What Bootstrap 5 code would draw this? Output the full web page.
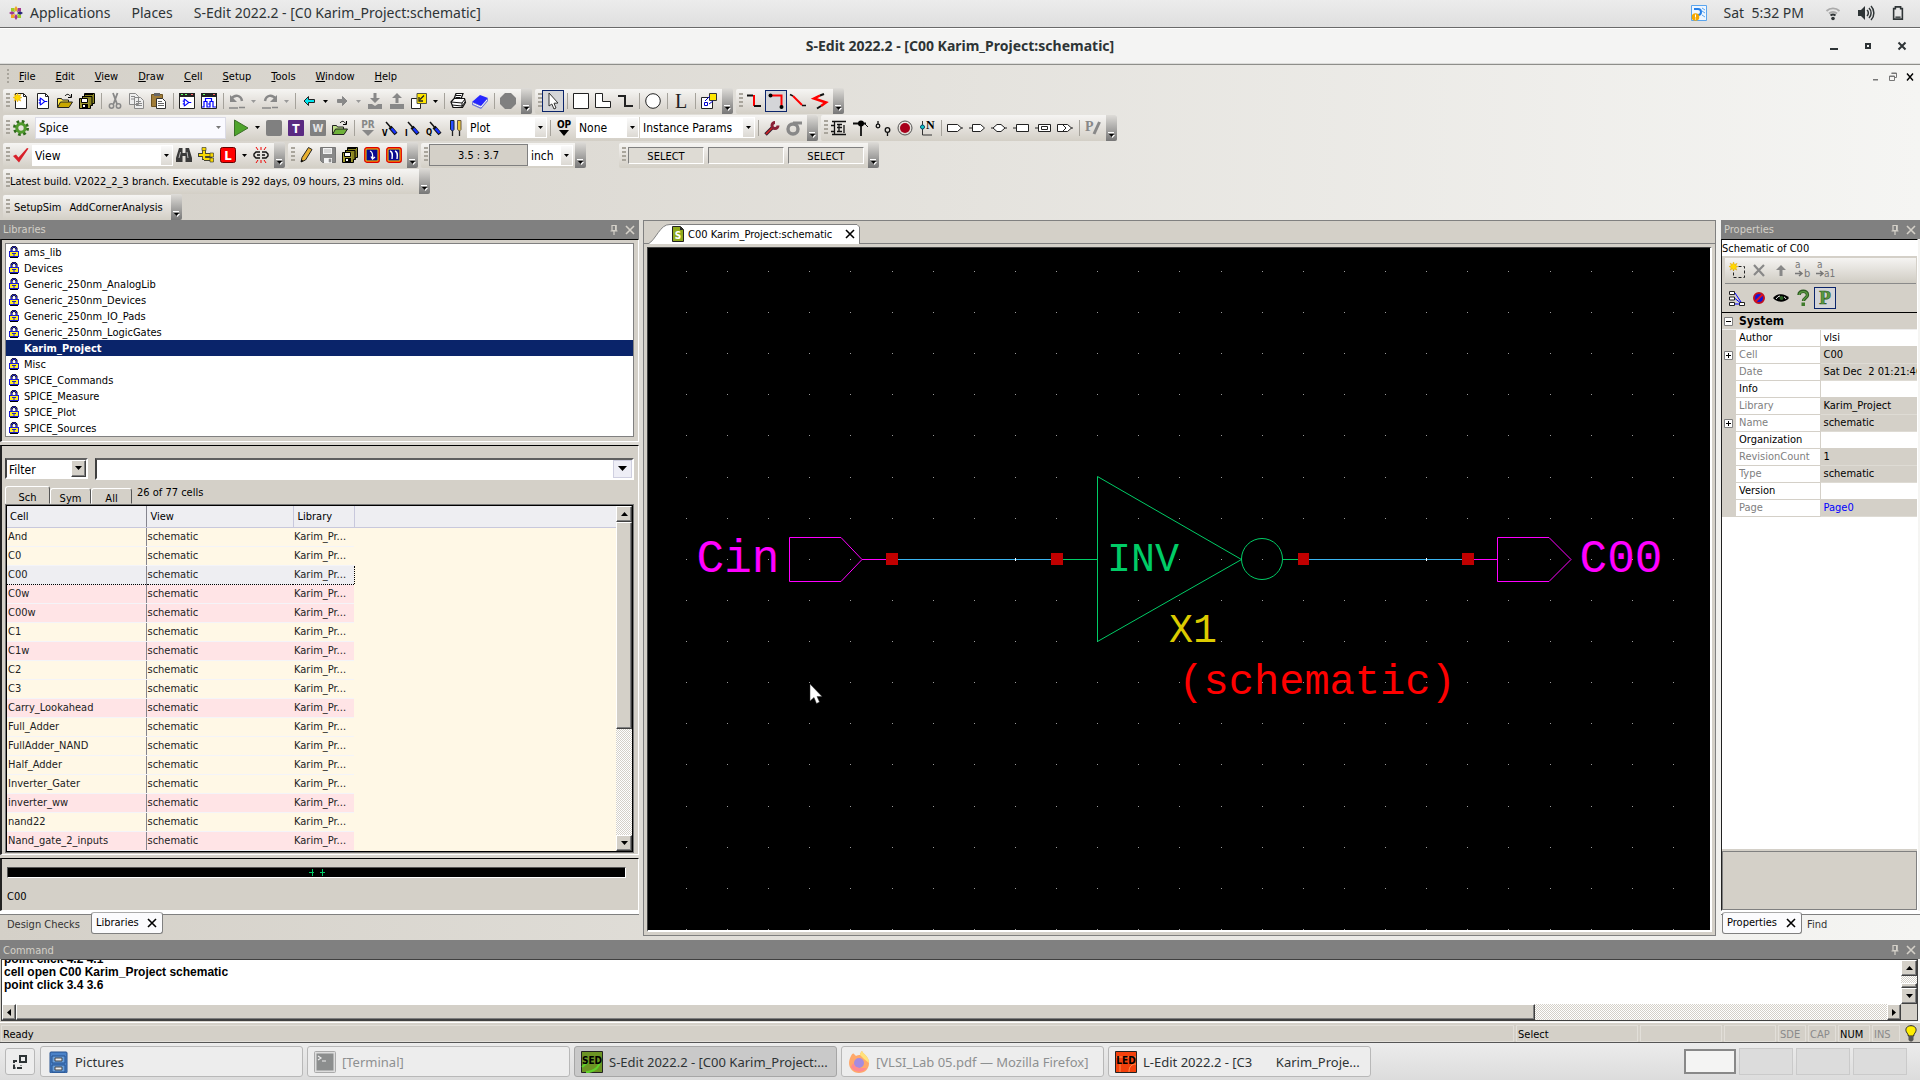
<!DOCTYPE html>
<html lang="en">
<head>
<meta charset="utf-8">
<meta name="viewport" content="width=device-width, initial-scale=1">
<title>S-Edit 2022.2 - [C00 Karim_Project:schematic]</title>
<link href="https://cdn.jsdelivr.net/npm/bootstrap@5.3.0/dist/css/bootstrap.min.css" rel="stylesheet">
<style>
:root{--face:#d4d0c8;--ui:"DejaVu Sans Condensed","DejaVu Sans",sans-serif;--desk:"Noto Sans","Open Sans",sans-serif}
body{font:11px/18px var(--ui);color:#000;background:linear-gradient(90deg,#d4d0c8,#f5f5f3);height:100vh;overflow:hidden}
button,input,select{font:inherit;color:inherit;border-radius:0}
button{border:0;background:none;padding:0}
a,a:hover{color:inherit;text-decoration:none}
svg{display:block;flex:none}
.ic{width:16px;height:16px;overflow:visible}
.ic-12{width:12px;height:12px}
.ic-14{width:14px;height:14px}
.ic-wide{width:18px}
.ic-doc{width:12px}
svg text{font-family:var(--ui)}
/* desktop bars */
.desk-top{height:28px;background:linear-gradient(#ececec,#dfdfdf);border-bottom:1px solid #6a6a6a;font:14px/26px var(--desk);color:#2e3436}
.desk-top .launch{gap:21px;padding-left:9px}
.desk-top .launch .gap-icon{gap:7px}
.desk-top .tray{gap:17px;padding-right:15px}
.desk-top .tray .near{margin-left:5px}
.desk-top .tray .wide{margin-left:4px}
.win-title{height:37px;background:#f4f4f3;border-bottom:1px solid #8e8e8a;box-shadow:inset 0 1px #fff,inset 0 -1px #dcdcda;font:bold 14px/36px var(--desk);color:#2e3436}
.win-title .ctl{gap:24px;right:13px;top:13px}
.win-title .ctl svg{width:10px;height:10px}
/* menus and tool bars */
.menu-strip{height:24px;padding-left:4px}
.menu-strip a{padding:1px 10px 0}
.mdi{gap:7px;padding-right:5px}
.mdi svg{width:10px;height:10px}
.grip{width:7px;height:16px;padding-left:3px;background:repeating-linear-gradient(#a9a59c 0 2px,transparent 2px 4px) content-box}
.grip.lone{width:5px}
.tool-row{height:26px;padding-left:3px;gap:3px}
.tool-row.tall{height:28px}
.tool-row.last{height:25px}
.tool-set{height:25px;background:linear-gradient(#f6f5f3,#e4e1dc 50%,#d3cfc6);border-radius:2px}
.tall .tool-set{height:26px}
.tb{width:22px;height:24px;display:flex;align-items:center;justify-content:center}
.tb.on{background:#d4d5d8;border:1px solid #0a246a;height:22px}
.dd{width:11px;height:24px;display:flex;align-items:center;justify-content:center}
.dd svg,.combo svg{width:5px;height:3px}
.dd.off{color:#999}
.vr-sep{width:6px;display:flex;justify-content:center}
.vr-sep::before{content:"";width:1px;height:16px;background:#a5a29b}
.hnd{width:11px;height:26px;margin-left:2px;background:linear-gradient(#dedcd8,#777);display:flex;align-items:end;justify-content:center;padding-bottom:3px;border-radius:0 2px 2px 0}
.hnd svg{width:7px;height:6px}
.combo{height:21px;background:#fff;position:relative;display:flex;font-size:12px}
.combo select{appearance:none;border:0;background:transparent;width:100%;padding:1px 14px 0 3px;outline:0}
.combo .arr{position:absolute;right:1px;top:1px;bottom:1px;width:11px;background:linear-gradient(#fafafa,#dcd9d3);display:flex;align-items:center;justify-content:center;pointer-events:none}
.combo.soft .arr{background:none;color:#777}
.w-spice{width:191px;height:22px;background:#fafaff;border:1px solid #dcdce6;margin:0 4px 0 3px}
.w-plot{width:80px}.w-none{width:64px;border-right:1px solid var(--face);margin-left:1px}.w-inst{width:115px}.w-view{width:141px}.w-inch{width:45px}
.coord{width:99px;height:22px;border:1px solid #808080;background:var(--face);text-align:center;line-height:22px;margin-left:1px}
.mode-box{width:76px;height:17px;margin:0 2px;border:1px solid;border-color:#808080 #fff #fff #808080;background:#dedbd4;text-align:center;line-height:17px}
.ms-off{margin-left:30px}
.build{padding:2px 13px 0 0}
.user-cmd{padding:2px 4px 0}
/* docked panes */
.cap{height:19px;background:#808080;color:#d4d0c8;padding:1px 3px 0;line-height:19px}
.dock-l{width:639px}
.dock-r{width:199px}
.well{background:var(--face);border:solid;border-width:1px 1px 1px 2px;border-color:#000 #fff #fff #222}
.stretch{min-height:0;min-width:0}
.cells-well{margin:3px 0;padding:12px 4px 2px 3px}
.lib-list{border:1px solid #808080;background:#fff;margin:3px 4px 4px 3px}
.lib-list a{display:flex;align-items:center;height:16px;padding:2px 0 0 3px;gap:5px}
.lib-list .lk{width:10px;height:12px;margin-top:-2px}
.lib-list a.cur{background:#0a246a;color:#fff;font-weight:bold;padding-left:18px}
.sunk{border:2px solid;border-color:#606060 #fff #fff #404040;background:#fff}
.filter-row{gap:7px;height:22px}
.filter-row .pick{width:83px;height:21px}
.pick select{appearance:none;border:0;background:transparent;width:100%;padding:1px 2px 0;outline:0;font-size:12px}
.raise{background:var(--face);border:1px solid;border-color:#fff #404040 #404040 #fff;box-shadow:inset -1px -1px #808080;display:flex;align-items:center;justify-content:center;flex:none}
.raise svg{width:7px;height:4px}
.pick .raise{width:15px}
.filter-row .txt{border:2px solid;border-color:#606060 #fff #fff #404040}
.filter-row .txt input{border:0;outline:0;background:#fff;min-width:0}
.filter-row .txt button{width:19px;background:#eeeef6;border:1px solid #cfcfe0;display:flex;align-items:center;justify-content:center}
.filter-row .txt svg{width:9px;height:5px}
.cell-tabs{height:18px;align-items:end;margin-top:6px}
.cell-tabs button{height:16px;width:41px;border:1px solid;border-color:#fff #555 transparent #fff;border-radius:3px 3px 0 0;line-height:20px}
.cell-tabs button.cur{height:18px;width:45px;line-height:22px}
.cell-tabs span{padding-left:5px;line-height:22px}
.cell-box{border:1px solid #000;outline:1px solid #777;background:#fff8e6;margin:1px 1px 0 1px}
.cell-box table{width:100%;table-layout:fixed}
.c-cell{width:139px}.c-view{width:147px}.c-lib{width:61px}
.cell-box th{height:22px;background:#eeeef2;font-weight:normal;padding:0 4px;border-bottom:1px solid #c8c8dc;border-right:1px solid #c8c8dc;line-height:20px}
.cell-box th:last-child,.cell-box td:last-child{border-right:0;border-bottom-color:transparent}
.cell-box th:last-child{border-bottom-color:#c8c8dc}
.cell-box td{height:19px;padding:0 2px 1px 1px;border-bottom:1px solid #f4f4f8;line-height:17px;white-space:nowrap;color:#222}
.cell-box td:first-child,.cell-box th:first-child{border-right:1px solid #85858f}
.cell-box th:first-child{padding-left:3px}
.cell-box tr.pk td:not(:last-child){background:#ffe4e6}
.cell-box tr.sel td:not(:last-child){background:#eeeef2;border-top:1px dotted #000;border-bottom:1px dotted #000}
.cell-box tr.sel td:nth-child(3){border-right:1px dotted #000}
.sb{background:repeating-conic-gradient(#fff 0 25%,#d4d0c8 0 50%) 0 0/2px 2px}
.sb-v{width:16px}.sb-v .raise{height:16px;width:16px}
.sb-v .thumb-cells{height:60%}.sb-v .thumb-cmd{height:5px}
.sb-h{height:16px;border-right:16px solid var(--face)}.sb-h .raise{height:16px;width:14px}
.sb-h svg{width:4px;height:7px}
.sb-h .thumb-wide{width:80%}
.preview-well{height:53px}
.preview{height:11px;background:#000;border:1px solid;border-color:#555 #fff #fff #555;margin:8px 12px 12px 5px;display:flex;justify-content:center}
.preview-name{padding-left:5px;line-height:14px}
.pane-tabs{height:29px;padding-left:7px;background:linear-gradient(#fff 0 3px,#808080 3px 4px,transparent 4px);color:#333}
.pane-tabs button{height:22px;margin:1px 11px 0 0;line-height:26px}
.pane-tabs .cur{background:#fbfbfd;border:1px solid #808080;border-top-color:#aaa;border-radius:3px;color:#000;padding:0 4px;display:flex;justify-content:space-between;align-items:center;margin-right:5px;width:72px}
.dock-r .pane-tabs{padding-left:1px}
.dock-r .pane-tabs .cur{width:80px}
/* document */
.doc{background:var(--face);border:1px solid #808080;margin:0 5px 4px 4px;padding:0 3px 3px}
.doc-tab{height:23px;border-bottom:1px solid #808080;margin:0 -3px 3px}
.doc-tab button{height:19px;display:flex;align-items:center;position:relative;width:216px;padding:2px 4px 0 28px}
.doc-tab .edge{position:absolute;left:0;top:0;width:216px;height:20px}
.doc-tab .lbl{position:relative;flex:1;text-align:left;padding:1px 0 0 4px}
.doc-tab .ic{position:relative}
.canvas{border:solid;border-width:1px 2px 2px 1px;border-color:#404040 #fff #fff #404040;background:#000}
.canvas text{font-family:"Liberation Mono",monospace;text-anchor:middle}
/* properties */
.prop-well{margin-right:2px;border-left-width:1px}
.prop-tools{background:linear-gradient(#f5f4f2,#d0ccc3);height:26px;margin:2px 1px 1px 3px;padding-left:1px;border-bottom:1px solid #8a8a8a}
.prop-tools.flat{background:none;border:0;margin-top:0}
.prop-head{background:#fff;height:16px;line-height:17px}
.prop-body{border-top:1px solid #000}
.prop-grid{width:100%;table-layout:fixed}
.p-mark{width:14px}.p-name{width:84px}
.prop-grid th,.prop-grid td{height:17px;padding:0 0 0 3px;line-height:16px;font-weight:normal;white-space:nowrap;overflow:hidden;border-bottom:1px solid var(--face);background:#fff}
.prop-grid td:first-child{background:var(--face);padding-left:2px;border:0}
.prop-grid th{border-right:1px solid var(--face)}
.prop-grid .grp td{background:var(--face);font-weight:bold;border-bottom:1px solid #eee;font-size:12px}
.prop-grid .ro th{color:#808080}
.prop-grid .ro td{background:var(--face)}
.prop-grid .ro td:last-child{border-bottom-color:#dedbd4}
.prop-grid .ro td.lnk{color:#00f}
.pm{width:9px;height:9px}
.prop-desc{height:59px;border:1px solid #808080;margin-top:2px;background:var(--face)}
/* command, status, task bar */
.cmd-text{font:bold 12px/13px "Liberation Sans",sans-serif;height:44px;padding-left:2px;background:#fff;display:flex;flex-direction:column;justify-content:end;padding-bottom:12px}
.cmd-box{border:1px solid #404040;margin:0 2px 0 1px}
.st{height:21px;background:var(--face);border-top:1px solid #fff;border-bottom:1px solid #555;padding:2px 0 0 1px;gap:2px;margin-top:1px}
.st span{border:1px solid #e2dfd9;padding-left:1px;line-height:18px;height:17px}
.st .dim{color:#8a8a8a}
.st .s-mode{width:122px}.st .s-a{width:82px}.st .s-b{width:52px}.st .s-key{width:28px}.st .s-num{width:32px}
.st svg{width:16px;height:17px;margin:0 1px}
.task{height:37px;background:linear-gradient(#ececec,#dcdcdc);padding:3px 13px 3px 5px;gap:4px;font:13px/30px var(--desk);color:#2e3436}
.task .app{width:263px;height:31px;border:1px solid #b8b8b8;border-radius:3px;background:#ededed;display:flex;align-items:center;gap:6px;padding:0 5px 0 6px;white-space:nowrap}
.task .app span{white-space:pre}
.task .app.cur{background:#c9c9c9;border-color:#a6a6a6}
.task .app.dim{color:#8d9091}
.task .app svg{width:22px;height:22px}
.task .home{width:30px;height:27px;border:1px solid #b8b8b8;border-radius:3px;background:#ededed;display:flex;align-items:center;justify-content:center;margin-right:1px}
.pager{gap:3px}
.pager button{width:54px;height:27px;background:#dcdcdc;border:1px solid #cacaca}
.pager button.cur{background:#f4f4f3;border:2px solid #888;height:25px;width:52px}
</style>
<script src="https://cdn.jsdelivr.net/npm/bootstrap@5.3.0/dist/js/bootstrap.bundle.min.js"></script>
</head>
<body class="d-flex flex-column">
<svg width="0" height="0" class="position-absolute" aria-hidden="true">
<symbol id="dn" viewBox="0 0 5 3"><path d="M0 0h5L2.500 3z" fill="currentColor"/></symbol>
<symbol id="up" viewBox="0 0 7 4"><path d="M0 4h7L3.500 0z"/></symbol>
<symbol id="down" viewBox="0 0 7 4"><path d="M0 0h7L3.500 4z"/></symbol>
<symbol id="lf" viewBox="0 0 4 7"><path d="M4 0v7L0 3.500z"/></symbol>
<symbol id="rt" viewBox="0 0 4 7"><path d="M0 0v7l4-3.500z"/></symbol>
<symbol id="more" viewBox="0 0 7 6"><path d="M0 0h6v1H0z" fill="#fff"/><path d="M2 3h5L4.500 6z" fill="#fff"/><path d="M1 2h5L3.500 5z"/></symbol>
<symbol id="pin" viewBox="0 0 12 12"><path d="M4 1.500h4v5H4zM2.500 7h7M6 7v4" fill="none" stroke="#d4d0c8" stroke-width="1.200"/><path d="M7 1h1.500v6H7z" fill="#d4d0c8"/></symbol>
<symbol id="xx" viewBox="0 0 12 12"><path d="M2 2l8 8M10 2l-8 8" stroke="currentColor" stroke-width="1.600" fill="none"/></symbol>
<symbol id="lk" viewBox="0 0 10 12"><path d="M2.500 6V2.500L4 1h2l1.500 1.500V6" fill="none" stroke="#000" stroke-width="2"/><path d="M2.500 5V2.500L4 1h2l1.500 1.500V5" fill="none" stroke="#2a2ae0" stroke-width="1"/><path d="M0 5h10v6H0z" fill="#1c1cd0"/><path d="M1 6h8v4H1z" fill="#ffee20"/><path d="M3 7h4v1H5.500v2h-1V8H3z" fill="#1c1cd0"/><path d="M1 11h8v1H1z"/></symbol>
<symbol id="page" viewBox="0 0 16 16"><path d="M2.500.5h8l3 3v12h-11z" fill="#fff" stroke="#222"/><path d="M10.500.5v3h3" fill="none" stroke="#222"/></symbol>
<symbol id="gate" viewBox="0 0 10 8"><path d="M2 0v8l5-4zM0 2.500h2M0 5.500h2M7 4h3" fill="none" stroke="#00f" stroke-width="1.200"/></symbol>
<symbol id="disks" viewBox="0 0 16 16"><path d="M5.500.5h10v10h-2v2h-2v3h-11v-10h3v-2h2z" fill="#8a8420" stroke="#000"/><path d="M3 3.500h10v9M5 1.500h9" fill="none" stroke="#000"/><path d="M1 6h9v9H1z" fill="#a09a30"/><path d="M2.500 5.500h6v4h-6z" fill="#fff" stroke="#000"/><path d="M3 11h6v4H3z"/><path d="M4 12h2v2H4z" fill="#fff"/></symbol>
<symbol id="probe" viewBox="0 0 16 16"><path d="M4 2l7 8" stroke="#111" stroke-width="1.500"/><path d="M8 7l6 7" stroke="#111" stroke-width="4"/><path d="M9.500 8.500l4 4.500" stroke="#1733ff" stroke-width="2.500"/></symbol>
<symbol id="star" viewBox="0 0 8 8"><path d="M4 0l.9 2.300L7.200 1.200 6 3.300 8 4 6 5l1 2.200-2.300-1L4 8 3.200 6 1 7.200 2 5 0 4l2-.8L1 1l2.200 1.200z" fill="#ffd800" stroke="#e0a000" stroke-width=".4"/></symbol>
</svg>

<header class="desk-top d-flex justify-content-between">
 <nav class="launch d-flex align-items-center">
  <a href="#" class="gap-icon d-flex align-items-center"><svg class="ic ic-14" viewBox="0 0 14 14"><path d="M7 0l2 3-2 3-2-3z" fill="#efa724"/><path d="M7 14l2-3-2-3-2 3z" fill="#a2368f"/><path d="M0 7l3-2 3 2-3 2z" fill="#a2368f"/><path d="M14 7l-3-2-3 2 3 2z" fill="#262577"/><path d="M2 2h3l1 4-4-1zM12 12H9L8 8l4 1z" fill="#9ccd2a"/><path d="M12 2v3L8 6l1-4z" fill="#a2368f"/><path d="M2 12V9l4-1-1 4z" fill="#efa724"/></svg>Applications</a>
  <a href="#">Places</a><a href="#">S-Edit 2022.2 - [C0 Karim_Project:schematic]</a>
 </nav>
 <div class="tray d-flex align-items-center">
  <svg class="ic" viewBox="0 0 16 16"><path d="M.5.500h15v15H.5z" fill="#eef6ff" stroke="#5aa5ee"/><path d="M3 4h4a3 3 0 0 1 0 6H5" fill="none" stroke="#2680e8" stroke-width="2"/><path d="M11 3l3 2M11 6l3 2M11 10l3 2" stroke="#5aa5ee"/><circle cx="4.500" cy="12" r="3.800" fill="#f5a800"/><path d="M4.500 9.500v3M4.500 13.500v1" stroke="#fff"/></svg>
  <span>Sat&nbsp; 5:32 PM</span>
  <svg class="ic wide" viewBox="0 0 16 16"><path d="M1.500 6a9.500 9.500 0 0 1 13 0M4 8.500a6 6 0 0 1 8 0" fill="none" stroke="#aaa" stroke-width="1.800"/><path d="M5.500 10.500a4 4 0 0 1 5 0" fill="none" stroke="#2e3436" stroke-width="1.800"/><circle cx="8" cy="13.500" r="1.800" fill="#2e3436"/></svg>
  <svg class="ic" viewBox="0 0 16 16"><path d="M0 5h3l4-4v14l-4-4H0z" fill="#2e3436"/><path d="M9 5a4 4 0 0 1 0 6M11 3a7 7 0 0 1 0 10M13 1a10 10 0 0 1 0 14" fill="none" stroke="#2e3436" stroke-width="1.500"/></svg>
  <svg class="ic ic-14" viewBox="1 0 14 16"><path d="M3 3h2V1h6v2h2v12H3z" fill="none" stroke="#2e3436" stroke-width="1.800"/><path d="M5 12h6v1.500H5z" fill="#2e3436"/></svg>
 </div>
</header>

<div class="win-title text-center position-relative">S-Edit 2022.2 - [C00 Karim_Project:schematic]
 <div class="ctl d-flex position-absolute">
  <button aria-label="Minimize"><svg viewBox="0 0 10 10"><path d="M1 7h8v2H1z" fill="#2e3436"/></svg></button>
  <button aria-label="Maximize"><svg viewBox="0 0 10 10"><path d="M3 3h4v4H3z" fill="none" stroke="#2e3436" stroke-width="2"/></svg></button>
  <button aria-label="Close"><svg viewBox="0 0 10 10"><path d="M1.500 1.500l7 7M8.500 1.500l-7 7" stroke="#2e3436" stroke-width="2"/></svg></button>
 </div>
</div>

<div class="toolbars">
 <div class="menu-strip d-flex align-items-center">
  <span class="grip lone"></span>
  <nav class="d-flex"><a href="#"><u>F</u>ile</a><a href="#"><u>E</u>dit</a><a href="#"><u>V</u>iew</a><a href="#"><u>D</u>raw</a><a href="#"><u>C</u>ell</a><a href="#"><u>S</u>etup</a><a href="#"><u>T</u>ools</a><a href="#"><u>W</u>indow</a><a href="#"><u>H</u>elp</a></nav>
  <div class="mdi d-flex ms-auto">
   <button aria-label="Minimize document"><svg viewBox="0 0 10 10"><path d="M2 7h5v1.500H2z" fill="#777"/></svg></button>
   <button aria-label="Restore document"><svg viewBox="0 0 10 10"><path d="M3.500 1h5v4.500h-2M1.500 4h5v4.500h-5zM3.500 1.500h5M1.500 4.500h5" fill="none" stroke="#777"/></svg></button>
   <button aria-label="Close document"><svg viewBox="0 0 10 10"><path d="M2 1.500l6 7M8 1.500l-6 7" stroke="#000" stroke-width="1.400"/></svg></button>
  </div>
 </div>

 <div class="tool-row d-flex">
  <div class="tool-set d-flex align-items-center"><span class="grip"></span>
   <button class="tb" aria-label="New"><svg class="ic" viewBox="0 0 16 16"><use href="#page" width="16" height="16"/><use href="#star" width="9" height="9"/></svg></button>
   <button class="tb" aria-label="New cell"><svg class="ic" viewBox="0 0 16 16"><use href="#page" width="16" height="16"/><use href="#gate" x="3.500" y="4.500" width="9" height="8"/></svg></button>
   <button class="tb" aria-label="Open"><svg class="ic" viewBox="0 0 16 16"><path d="M.5 14V5.500h4l1 1.500h6v2" fill="#ffe94a" stroke="#222"/><path d="M.5 14.500l3-5.500h12l-3.500 5.500z" fill="#c9a800" stroke="#222"/><path d="M8 3c2-2.500 4-2 5.500.5M14.500 1v3.500H11" fill="none" stroke="#000"/></svg></button>
   <button class="tb" aria-label="Save all"><svg class="ic"><use href="#disks"/></svg></button><span class="vr-sep"></span>
   <button class="tb" aria-label="Cut"><svg class="ic" viewBox="0 0 16 16"><path d="M10.500 0L6.500 11M6 0l4 11" stroke="#888" stroke-width="1.800"/><circle cx="4.500" cy="13" r="2.200" fill="none" stroke="#888" stroke-width="1.500"/><circle cx="11.500" cy="13" r="2.200" fill="none" stroke="#888" stroke-width="1.500"/></svg></button>
   <button class="tb" aria-label="Copy"><svg class="ic" viewBox="0 0 16 16"><path d="M.5.500h6l3 3v8h-9zM5.500 4.500h6l3 3v8h-9z" fill="#eee" stroke="#888"/><path d="M2 3.500h4M2 6h3M7 8.500h5M7 10.500h6M7 12.500h6" stroke="#888"/></svg></button>
   <button class="tb" aria-label="Paste"><svg class="ic" viewBox="0 0 16 16"><path d="M.5 1.500h11v12H.5z" fill="#a07c38" stroke="#6d5320"/><path d="M3 0h6v3H3z" fill="#666"/><path d="M5.500 5.500h6l3 3v7h-9z" fill="#fff" stroke="#333"/><path d="M7 8.500h4M7 10.500h6M7 12.500h6" stroke="#666"/></svg></button><span class="vr-sep"></span>
   <button class="tb" aria-label="Schematic view"><svg class="ic" viewBox="0 0 16 16"><path d="M.5.500h15v15H.5z" fill="#fff" stroke="#222"/><path d="M0 0h16v4H0z" fill="#222"/><path d="M2 1.500h2M6 1.500h2" stroke="#6f6"/><path d="M12 1.500h2" stroke="#f66"/><use href="#gate" x="3.500" y="5.500" width="9" height="8"/></svg></button>
   <button class="tb" aria-label="Hierarchy view"><svg class="ic" viewBox="0 0 16 16"><path d="M.5.500h15v15H.5z" fill="#fff" stroke="#222"/><path d="M0 0h16v4H0z" fill="#222"/><path d="M2 1.500h2" stroke="#6f6"/><path d="M12 1.500h2" stroke="#f66"/><path d="M1 14h2V8.500h3V14h3V8.500h3V14h3M4.500 8V5.500h6V8M7 11h2" fill="none" stroke="#00f" stroke-width="1.200"/></svg></button><span class="vr-sep"></span>
   <button class="tb" aria-label="Undo"><svg class="ic" viewBox="0 0 16 16"><path d="M2 6c4-5 10-4 11 2" fill="none" stroke="#888" stroke-width="2.500"/><path d="M1 2v7h7z" fill="#888"/><path d="M0 15h9M10 14.500h6" stroke="#888" stroke-width="1.500"/></svg></button><button class="dd off" aria-label="Undo list"><svg><use href="#dn"/></svg></button>
   <button class="tb" aria-label="Redo"><svg class="ic" viewBox="0 0 16 16"><path d="M14 6C10 1 4 2 3 8" fill="none" stroke="#888" stroke-width="2.500"/><path d="M15 2v7H8z" fill="#888"/><path d="M0 15h9M10 14.500h6" stroke="#888" stroke-width="1.500"/></svg></button><button class="dd off" aria-label="Redo list"><svg><use href="#dn"/></svg></button><span class="vr-sep"></span>
   <button class="tb" aria-label="Back"><svg class="ic" viewBox="0 0 16 16"><path d="M3 8l4.500-4.500v3h6v3h-6v3z" fill="#00e5ee" stroke="#222"/></svg></button><button class="dd" aria-label="Back list"><svg><use href="#dn"/></svg></button>
   <button class="tb" aria-label="Forward"><svg class="ic" viewBox="0 0 16 16"><path d="M13 8L8.500 3.500v3h-5v3h5v3z" fill="#888" stroke="#888"/></svg></button><button class="dd off" aria-label="Forward list"><svg><use href="#dn"/></svg></button>
   <button class="tb" aria-label="Push"><svg class="ic" viewBox="0 0 16 16"><path d="M6.500 0h3v5H13l-5 5-5-5h3.500z" fill="#888"/><path d="M1 11h4l3 2 3-2h4v5H1z" fill="#888"/></svg></button>
   <button class="tb" aria-label="Pop"><svg class="ic" viewBox="0 0 16 16"><path d="M6.500 10h3V5H13L8 0 3 5h3.500z" fill="#888"/><path d="M1 11h14v5H1z" fill="#888"/></svg></button>
   <button class="tb" aria-label="Open view"><svg class="ic" viewBox="0 0 16 16"><path d="M.5 5.500h9v10h-9z" fill="#fff" stroke="#222"/><path d="M6 .5h9.500v10H6z" fill="#ffe600" stroke="#554"/><path d="M13 2.500L9 6.500M8 4v4h4" stroke="#222" fill="none" stroke-width="1.300"/></svg></button><button class="dd" aria-label="Open view list"><svg><use href="#dn"/></svg></button><span class="vr-sep"></span>
   <button class="tb" aria-label="Print"><svg class="ic" viewBox="0 0 16 16"><path d="M4 6l2-5.500h7L11 6M1 9l3-3.500h10.500l1 4-3 5H3z" fill="#fff" stroke="#111" stroke-width="1.200"/><path d="M1 9l11 1 3-4M2 12l10 1 3-4M12 10v5M6 2.500h5M5.500 4.500h5" fill="none" stroke="#111"/></svg></button>
   <button class="tb" aria-label="Manual"><svg class="ic" viewBox="0 0 16 16"><path d="M0 9l8-7 8 3-7 8z" fill="#2626ff"/><path d="M0 9v3l9 4 7-8V5l-7 8z" fill="#6f78d8"/><path d="M1 10.500l8 3.500 6-7" fill="none" stroke="#fff"/></svg></button><span class="vr-sep"></span>
   <button class="tb" aria-label="Stop"><svg class="ic" viewBox="0 0 16 16"><path d="M5 0h6l5 5v6l-5 5H5l-5-5V5z" fill="#808080"/></svg></button>
   <button class="hnd" aria-label="Options"><svg><use href="#more"/></svg></button></div>
  <div class="tool-set d-flex align-items-center"><span class="grip"></span>
   <button class="tb on" aria-label="Select"><svg class="ic" viewBox="0 0 16 16"><path d="M4 0l9 10-4 .3L11 15l-2 1-2.200-5L4 13z" fill="#fff" stroke="#333"/></svg></button><span class="vr-sep"></span>
   <button class="tb" aria-label="Box"><svg class="ic" viewBox="0 0 16 16"><path d="M.5.500h15v15H.5z" fill="#fff" stroke="#222"/></svg></button>
   <button class="tb" aria-label="Polygon"><svg class="ic" viewBox="0 0 16 16"><path d="M.5.500h7v8h8v6H.5z" fill="#fff" stroke="#222"/></svg></button>
   <button class="tb" aria-label="Path"><svg class="ic" viewBox="0 0 16 16"><path d="M1 3h7v10h8" fill="none" stroke="#222" stroke-width="2"/></svg></button><span class="vr-sep"></span>
   <button class="tb" aria-label="Circle"><svg class="ic" viewBox="0 0 16 16"><circle cx="8" cy="8" r="7.300" fill="#fff" stroke="#222"/></svg></button><span class="vr-sep"></span>
   <button class="tb" aria-label="Label"><svg class="ic" viewBox="0 0 16 16"><text x="2" y="15" style="font:20px 'Liberation Serif',serif" fill="#222">L</text></svg></button><span class="vr-sep"></span>
   <button class="tb" aria-label="Instance"><svg class="ic" viewBox="0 0 16 16"><path d="M.5 4.500h11v11H.5z" fill="#fff" stroke="#222"/><path d="M8.500.500h7v7h-7z" fill="#ffe600" stroke="#333"/><path d="M3.500 9.500h3v3h-3zM4 8l5-5M8 11l4-3" fill="none" stroke="#00c"/></svg></button>
   <button class="hnd" aria-label="Options"><svg><use href="#more"/></svg></button></div>
  <div class="tool-set d-flex align-items-center"><span class="grip"></span>
   <button class="tb" aria-label="Wire"><svg class="ic" viewBox="0 0 16 16"><path d="M1 2.500h6" stroke="#111" stroke-width="2"/><path d="M8 2v11" stroke="#f00" stroke-width="2"/><path d="M8 13h7" stroke="#111" stroke-width="2"/></svg></button>
   <button class="tb on" aria-label="Orthogonal wire"><svg class="ic" viewBox="0 0 16 16"><path d="M2 2.500h11.500V14" fill="none" stroke="#f00" stroke-width="2"/><circle cx="2.500" cy="2.500" r="2"/><circle cx="13.500" cy="14" r="2"/></svg></button>
   <button class="tb" aria-label="Diagonal wire"><svg class="ic" viewBox="0 0 16 16"><path d="M0 1.500l3 1.500" stroke="#111" stroke-width="1.500"/><path d="M3 3l9 9" stroke="#f00" stroke-width="2"/><path d="M12 12.500h4" stroke="#111" stroke-width="1.500"/></svg></button>
   <button class="tb" aria-label="Any angle wire"><svg class="ic" viewBox="0 0 16 16"><path d="M8 2.500L2 5.500l12 4-5 3.500" fill="none" stroke="#f00" stroke-width="2.500"/><path d="M12 1L8 2.500M9 13l-4 2.500" stroke="#111" stroke-width="2"/></svg></button>
   <button class="hnd" aria-label="Options"><svg><use href="#more"/></svg></button></div>
 </div>

 <div class="tool-row tall d-flex">
  <div class="tool-set d-flex align-items-center"><span class="grip"></span>
   <button class="tb" aria-label="Simulation setup"><svg class="ic" viewBox="0 0 16 16"><circle cx="8" cy="8" r="6.500" fill="none" stroke="#2f6a1c" stroke-width="3" stroke-dasharray="2.600 2.500"/><circle cx="8" cy="8" r="4.200" fill="none" stroke="#4f9a2c" stroke-width="3"/></svg></button>
   <div class="combo soft w-spice"><select aria-label="Simulator"><option>Spice</option></select><span class="arr"><svg><use href="#dn"/></svg></span></div>
   <button class="tb" aria-label="Run"><svg class="ic" viewBox="0 0 16 16"><path d="M1.500 0l13.500 8-13.500 8z" fill="#4fa52c" stroke="#3b6f27"/></svg></button><button class="dd" aria-label="Run list"><svg><use href="#dn"/></svg></button>
   <button class="tb" aria-label="Halt"><svg class="ic" viewBox="0 0 16 16"><rect width="16" height="16" rx="2" fill="#808080"/></svg></button>
   <button class="tb" aria-label="T-Spice"><svg class="ic" viewBox="0 0 16 16"><rect width="16" height="16" rx="1" fill="#5a2a82"/><text x="8" y="13" text-anchor="middle" font-size="12" font-weight="bold" fill="#fff">T</text></svg></button>
   <button class="tb" aria-label="Waveforms"><svg class="ic" viewBox="0 0 16 16"><rect width="16" height="16" rx="1" fill="#808080"/><text x="8" y="12" text-anchor="middle" font-size="11" font-weight="bold" fill="#e4e4e4">W</text></svg></button>
   <button class="tb" aria-label="Open results"><svg class="ic" viewBox="0 0 16 16"><path d="M.5 14V5.500h4l1 1.500h6v2" fill="#bfe08a" stroke="#222"/><path d="M.5 14.500l3-5.500h12l-3.500 5.500z" fill="#6fb23a" stroke="#222"/><path d="M8 3c2-2.500 4-2 5.500.5M14.500 1v3.500H11" fill="none" stroke="#000"/></svg></button><span class="vr-sep"></span>
   <button class="tb" aria-label="Probe results"><svg class="ic" viewBox="0 0 16 16"><text x="8" y="8" text-anchor="middle" font-size="10" font-weight="bold" fill="#888">PR</text><path d="M2 10h12l-6 6z" fill="#888"/></svg></button>
   <button class="tb" aria-label="Probe voltage"><svg class="ic" viewBox="0 0 16 16"><use href="#probe" width="16" height="16"/><text x="0" y="16" font-size="8" font-weight="bold">V</text></svg></button>
   <button class="tb" aria-label="Probe current"><svg class="ic" viewBox="0 0 16 16"><use href="#probe" width="16" height="16"/><text x="1" y="16" font-size="8" font-weight="bold">I</text></svg></button>
   <button class="tb" aria-label="Probe charge"><svg class="ic" viewBox="0 0 16 16"><use href="#probe" width="16" height="16"/><text x="0" y="15" font-size="8" font-weight="bold">Q</text></svg></button>
   <button class="tb" aria-label="Probes"><svg class="ic" viewBox="0 0 16 16"><path d="M4.500 8v8M11.500 8v8" stroke="#222" stroke-width="1.300"/><path d="M2.500.500h3.500v9l-1.500 1.500-2-1.500z" fill="#2a4fff" stroke="#123"/><path d="M9.500.500h3.500v9l-1.500 1.500-2-1.500z" fill="#e8c83a" stroke="#654"/></svg></button>
   <div class="combo w-plot"><select aria-label="Probe action"><option>Plot</option></select><span class="arr"><svg><use href="#dn"/></svg></span></div><span class="vr-sep"></span>
   <button class="tb" aria-label="Operating point"><svg class="ic" viewBox="0 0 16 16"><text x="8" y="8" text-anchor="middle" font-size="10" font-weight="bold">OP</text><path d="M3 10h10l-5 6z"/></svg></button>
   <div class="combo w-none"><select aria-label="Operating point annotation"><option>None</option></select><span class="arr"><svg><use href="#dn"/></svg></span></div>
   <div class="combo w-inst"><select aria-label="Annotation"><option>Instance Params</option></select><span class="arr"><svg><use href="#dn"/></svg></span></div><span class="vr-sep"></span>
   <button class="tb" aria-label="Options tool"><svg class="ic" viewBox="0 0 16 16"><path d="M1.500 14.500L9 7" stroke="#3a2030" stroke-width="3.500"/><path d="M2 14l7-7" stroke="#d22" stroke-width="1.500"/><path d="M11 2.500a3 3 0 1 0 3 3" fill="none" stroke="#8a2036" stroke-width="3"/></svg></button>
   <button class="tb" aria-label="Statistics"><svg class="ic" viewBox="0 0 16 16"><circle cx="7" cy="9" r="5" fill="none" stroke="#888" stroke-width="3.400"/><path d="M7 3h9" stroke="#888" stroke-width="3"/></svg></button>
   <button class="hnd" aria-label="Options"><svg><use href="#more"/></svg></button></div>
  <div class="tool-set d-flex align-items-center"><span class="grip"></span>
   <button class="tb" aria-label="Symbol"><svg class="ic" viewBox="0 0 16 16"><path d="M1 1.500h14M1 14.500h14M3.500 1v14M6 4.500h5M6 7.500h5M6 11.500h5M8 4v8M0 5.500h3M0 11.500h3M13 5v8" fill="none" stroke="#111" stroke-width="1.300"/></svg></button>
   <button class="tb" aria-label="Net"><svg class="ic" viewBox="0 0 16 16"><path d="M0 3.500h13M8 4v12" stroke="#111" stroke-width="1.800"/><circle cx="8" cy="3.500" r="3"/><path d="M12 4l3 3" stroke="#111"/></svg></button>
   <button class="tb" aria-label="Net label"><svg class="ic" viewBox="0 0 16 16"><circle cx="3" cy="6" r="1.800" fill="none" stroke="#111" stroke-width="1.300"/><circle cx="12.500" cy="10" r="2.300" fill="none" stroke="#111" stroke-width="1.300"/><path d="M3 1v3M12.500 12v4" stroke="#111" stroke-width="1.300"/></svg></button>
   <button class="tb" aria-label="No connect"><svg class="ic" viewBox="0 0 16 16"><circle cx="8" cy="8" r="7" fill="none" stroke="#555"/><circle cx="8" cy="8" r="5" fill="#a8001c"/></svg></button>
   <button class="tb" aria-label="Net name"><svg class="ic" viewBox="0 0 16 16"><path d="M3.500 1v14H13" fill="none" stroke="#333"/><circle cx="3.500" cy="7" r="2" fill="#1cc" stroke="#046"/><text x="7" y="9" style="font:bold 12px 'Liberation Serif',serif">N</text></svg></button><span class="vr-sep"></span>
   <button class="tb" aria-label="In port"><svg class="ic" viewBox="0 0 16 16"><path d="M.5 4.500h10l4 3.500-4 3.500H.5zM14 8h2" fill="#fff" stroke="#222"/></svg></button>
   <button class="tb" aria-label="Out port"><svg class="ic" viewBox="0 0 16 16"><path d="M0 8h3M3.500 4.500h8l4 3.500-4 3.500h-8z" fill="#fff" stroke="#222"/></svg></button>
   <button class="tb" aria-label="In-out port"><svg class="ic" viewBox="0 0 16 16"><path d="M0 8h2M14 8h2M2 8l4-3.500h4L14 8l-4 3.500H6z" fill="#fff" stroke="#222"/></svg></button>
   <button class="tb" aria-label="Other port"><svg class="ic" viewBox="0 0 16 16"><path d="M0 8h3M3.500 4.500h12v7h-12z" fill="#fff" stroke="#222"/></svg></button>
   <button class="tb" aria-label="Global port"><svg class="ic" viewBox="0 0 16 16"><path d="M0 8h3M3.500 4.500h12v7h-12zM6.500 6.500h6v3h-6z" fill="#fff" stroke="#222"/></svg></button>
   <button class="tb" aria-label="Global net"><svg class="ic" viewBox="0 0 16 16"><path d="M.5 4.500h10l4 3.500-4 3.500H.5z" fill="#fff" stroke="#222"/><path d="M5.500 4.500L9 8l-3.500 3.500M14 8h2" fill="none" stroke="#222"/></svg></button><span class="vr-sep"></span>
   <button class="tb" aria-label="Edit ports"><svg class="ic" viewBox="0 0 16 16"><text x="0" y="11" style="font:bold 14px 'Liberation Serif',serif" fill="#888">P</text><path d="M14.500 2L9 14" stroke="#888" stroke-width="3"/></svg></button>
   <button class="hnd" aria-label="Options"><svg><use href="#more"/></svg></button></div>
 </div>

 <div class="tool-row d-flex">
  <div class="tool-set d-flex align-items-center"><span class="grip"></span>
   <button class="tb" aria-label="Check"><svg class="ic" viewBox="0 0 16 16"><path d="M0 9l3-1.500 2.500 3L14 1l1.500.5L6 15.500z" fill="#d8202a"/></svg></button>
   <div class="combo w-view"><select aria-label="Check scope"><option>View</option></select><span class="arr"><svg><use href="#dn"/></svg></span></div>
   <button class="tb" aria-label="Find"><svg class="ic" viewBox="0 0 16 16"><path d="M3 1h3.500v5h3V1H13l3 10v4H9.500V9h-3v6H0v-4z" fill="#3a3a3a"/><path d="M3 11l1.500-6M12 11l-1-6" stroke="#bbb"/></svg></button>
   <button class="tb" aria-label="Navigate hierarchy"><svg class="ic" viewBox="0 0 16 16"><path d="M0 8h14M6 1v12M6 12h8" fill="none" stroke="#443" stroke-width="4"/><path d="M1 8h12M6 2v10M6 12h7" fill="none" stroke="#f8d800" stroke-width="2.200"/><path d="M4 .5h4v3H4zM12 6h3.500v4H12zM12 11h3.500v4H12z" fill="#f8d800" stroke="#443" stroke-width=".7"/></svg></button>
   <button class="tb" aria-label="Layout"><svg class="ic" viewBox="0 0 16 16"><rect x=".5" y=".5" width="15" height="15" rx="2" fill="#f00" stroke="#600"/><text x="8" y="13" text-anchor="middle" font-size="13" font-weight="bold" fill="#fff">L</text></svg></button><button class="dd" aria-label="Layout list"><svg><use href="#dn"/></svg></button>
   <button class="tb" aria-label="Break link"><svg class="ic" viewBox="0 0 16 16"><path d="M7 5H3L1 7v2l2 2h4M9 5h4l2 2v2l-2 2H9M4 8h3M9 8h3" fill="none" stroke="#111" stroke-width="1.400"/><path d="M8 0v3M8 13v3M3 0l2 3M13 0l-2 3M3 16l2-3M13 16l-2-3" stroke="#e00"/></svg></button>
   <button class="hnd" aria-label="Options"><svg><use href="#more"/></svg></button></div>
  <div class="tool-set d-flex align-items-center"><span class="grip"></span>
   <button class="tb" aria-label="Edit"><svg class="ic" viewBox="0 0 16 16"><path d="M3 15l1-4.500L10.500.5l3.500 2L7.500 13z" fill="#e8b030" stroke="#222"/><path d="M3 15l.5-2.500L5.500 14z"/></svg></button>
   <button class="tb" aria-label="Save"><svg class="ic" viewBox="0 0 16 16"><path d="M.5.500h15v15H2.500l-2-2z" fill="#888" stroke="#777"/><path d="M3 1h9v6H3zM4 11h8v5H4z" fill="#f2f2f2"/><path d="M9 12h2v3H9zM4 3h7M4 5h7" fill="#888" stroke="#999" stroke-width=".6"/></svg></button>
   <button class="tb" aria-label="Save all cells"><svg class="ic"><use href="#disks"/></svg></button>
   <button class="tb" aria-label="Descend"><svg class="ic" viewBox="0 0 16 16"><rect x=".8" y=".8" width="14.400" height="14.400" rx="2" fill="#fc0" stroke="#d00" stroke-width="1.400"/><path d="M2.500 2.500h11v11h-11z" fill="#0a0a90"/><path d="M6 4c3 1 3 4 2.500 8M7 9.500l1.500 2.500L11 10" fill="none" stroke="#fff" stroke-width="1.300"/></svg></button>
   <button class="tb" aria-label="Descend all"><svg class="ic" viewBox="0 0 16 16"><rect x=".8" y=".8" width="14.400" height="14.400" rx="2" fill="#fc0" stroke="#d00" stroke-width="1.400"/><path d="M2.500 2.500h11v11h-11z" fill="#0a0a90"/><path d="M4 4c3 1 2.500 4 2 8M9 4c3 1 2.500 4 2 8" fill="none" stroke="#fff" stroke-width="1.400"/></svg></button>
   <button class="hnd" aria-label="Options"><svg><use href="#more"/></svg></button></div>
  <div class="tool-set d-flex align-items-center"><span class="grip"></span><div class="coord">3.5 : 3.7</div><div class="combo w-inch"><select aria-label="Units"><option>inch</option></select><span class="arr"><svg><use href="#dn"/></svg></span></div><button class="hnd" aria-label="Options"><svg><use href="#more"/></svg></button></div>
  <div class="tool-set ms-off d-flex align-items-center"><span class="grip"></span><div class="mode-box">SELECT</div><div class="mode-box"></div><div class="mode-box">SELECT</div><button class="hnd" aria-label="Options"><svg><use href="#more"/></svg></button></div>
 </div>
 <div class="tool-row d-flex"><div class="tool-set d-flex align-items-center"><span class="grip"></span><span class="build">Latest build. V2022_2_3 branch. Executable is 292 days, 09 hours, 23 mins old.</span><button class="hnd" aria-label="Options"><svg><use href="#more"/></svg></button></div></div>
 <div class="tool-row last d-flex"><div class="tool-set d-flex align-items-center"><span class="grip"></span><button class="user-cmd">SetupSim</button><button class="user-cmd">AddCornerAnalysis</button><button class="hnd ms-1" aria-label="Options"><svg><use href="#more"/></svg></button></div></div>
</div>

<main class="stretch d-flex flex-fill">
 <section class="dock-l d-flex flex-column flex-shrink-0">
  <div class="cap d-flex align-items-center">Libraries<svg class="ic-12 ms-auto"><use href="#pin"/></svg><svg class="ic-12 ms-1"><use href="#xx"/></svg></div>
  <div class="well">
   <nav class="lib-list">
    <a href="#"><svg class="lk"><use href="#lk"/></svg>ams_lib</a>
    <a href="#"><svg class="lk"><use href="#lk"/></svg>Devices</a>
    <a href="#"><svg class="lk"><use href="#lk"/></svg>Generic_250nm_AnalogLib</a>
    <a href="#"><svg class="lk"><use href="#lk"/></svg>Generic_250nm_Devices</a>
    <a href="#"><svg class="lk"><use href="#lk"/></svg>Generic_250nm_IO_Pads</a>
    <a href="#"><svg class="lk"><use href="#lk"/></svg>Generic_250nm_LogicGates</a>
    <a href="#" class="cur">Karim_Project</a>
    <a href="#"><svg class="lk"><use href="#lk"/></svg>Misc</a>
    <a href="#"><svg class="lk"><use href="#lk"/></svg>SPICE_Commands</a>
    <a href="#"><svg class="lk"><use href="#lk"/></svg>SPICE_Measure</a>
    <a href="#"><svg class="lk"><use href="#lk"/></svg>SPICE_Plot</a>
    <a href="#"><svg class="lk"><use href="#lk"/></svg>SPICE_Sources</a>
   </nav>
  </div>
  <div class="well cells-well stretch flex-fill d-flex flex-column">
   <div class="filter-row d-flex">
    <div class="pick sunk d-flex"><select aria-label="Filter kind"><option>Filter</option></select><span class="raise"><svg><use href="#down"/></svg></span></div>
    <div class="txt d-flex flex-fill"><input type="text" class="flex-fill" aria-label="Filter text"><button aria-label="Filter history"><svg viewBox="0 0 9 5"><path d="M0 0h9L4.500 5z"/></svg></button></div>
   </div>
   <div class="cell-tabs d-flex"><button class="cur">Sch</button><button>Sym</button><button>All</button><span>26 of 77 cells</span></div>
   <div class="cell-box d-flex flex-fill overflow-hidden">
    <div class="flex-fill">
    <table>
     <colgroup><col class="c-cell"><col class="c-view"><col class="c-lib"><col></colgroup>
     <thead><tr><th>Cell</th><th>View</th><th>Library</th><th></th></tr></thead>
     <tbody>
      <tr><td>And</td><td>schematic</td><td>Karim_Pr...</td><td></td></tr>
      <tr><td>C0</td><td>schematic</td><td>Karim_Pr...</td><td></td></tr>
      <tr class="sel"><td>C00</td><td>schematic</td><td>Karim_Pr...</td><td></td></tr>
      <tr class="pk"><td>C0w</td><td>schematic</td><td>Karim_Pr...</td><td></td></tr>
      <tr class="pk"><td>C00w</td><td>schematic</td><td>Karim_Pr...</td><td></td></tr>
      <tr><td>C1</td><td>schematic</td><td>Karim_Pr...</td><td></td></tr>
      <tr class="pk"><td>C1w</td><td>schematic</td><td>Karim_Pr...</td><td></td></tr>
      <tr><td>C2</td><td>schematic</td><td>Karim_Pr...</td><td></td></tr>
      <tr><td>C3</td><td>schematic</td><td>Karim_Pr...</td><td></td></tr>
      <tr class="pk"><td>Carry_Lookahead</td><td>schematic</td><td>Karim_Pr...</td><td></td></tr>
      <tr><td>Full_Adder</td><td>schematic</td><td>Karim_Pr...</td><td></td></tr>
      <tr><td>FullAdder_NAND</td><td>schematic</td><td>Karim_Pr...</td><td></td></tr>
      <tr><td>Half_Adder</td><td>schematic</td><td>Karim_Pr...</td><td></td></tr>
      <tr><td>Inverter_Gater</td><td>schematic</td><td>Karim_Pr...</td><td></td></tr>
      <tr class="pk"><td>inverter_ww</td><td>schematic</td><td>Karim_Pr...</td><td></td></tr>
      <tr><td>nand22</td><td>schematic</td><td>Karim_Pr...</td><td></td></tr>
      <tr class="pk"><td>Nand_gate_2_inputs</td><td>schematic</td><td>Karim_Pr...</td><td></td></tr>
     </tbody>
    </table></div>
    <div class="sb sb-v d-flex flex-column flex-shrink-0"><button class="raise" aria-label="Scroll up"><svg><use href="#up"/></svg></button><span class="raise thumb-cells"></span><button class="raise mt-auto" aria-label="Scroll down"><svg><use href="#down"/></svg></button></div>
   </div>
  </div>
  <div class="well preview-well">
   <div class="preview"><svg width="20" height="9" viewBox="0 0 20 9"><path d="M2 4.500h5M5.500 1v7M13 4.500h5M15.500 1v7" stroke="#0c6" fill="none"/></svg></div>
   <div class="preview-name">C00</div>
  </div>
  <div class="pane-tabs d-flex align-items-start"><button>Design Checks</button><button class="cur">Libraries<svg class="ic-12"><use href="#xx"/></svg></button></div>
 </section>

 <section class="doc stretch flex-fill d-flex flex-column">
  <div class="doc-tab d-flex align-items-end">
   <button><svg class="edge" viewBox="0 0 216 20"><path d="M4 20C12 16 16 0 26 .5h187l2.500 2.500V20" fill="#fff" stroke="#808080"/></svg>
    <svg class="ic ic-doc" viewBox="0 0 12 16"><path d="M.5.500h8l3 3v12H.5z" fill="#8fa91c" stroke="#222"/><path d="M8 .5v3.500h3.500" fill="#222"/><text x="6" y="13" text-anchor="middle" font-size="10" font-weight="bold" fill="#fff">S</text></svg>
    <span class="lbl">C00 Karim_Project:schematic</span><svg class="ic ic-12"><use href="#xx"/></svg></button>
  </div>
  <div class="canvas stretch flex-fill">
   <svg width="100%" height="100%" viewBox="648 248 1062 682" role="img" aria-label="Inverter schematic">
    <path id="dots" stroke="#9a9a9a" shape-rendering="crispEdges"/>
    <g fill="none" stroke-width="1">
     <path d="M789.500 537.500h51.500l21 22-21 22h-51.500zM862 559.500h25M1474 559.500h23M1497.500 537.500h51.500l22 22-22 22h-51.500z" stroke="#f0f"/>
     <path d="M898 559.500h153M1309 559.500h153" stroke="#3ab4f0"/>
     <path d="M1015.500 558v3M1426.500 558v3" stroke="#fff"/>
     <path d="M1062 559.500h35.500M1097.500 476.500v165l144-82zM1283 559.500h15" stroke="#00cc66"/><circle cx="1262" cy="559" r="20.500" stroke="#00cc66"/>
    </g>
    <path d="M886 553h12v12h-12zM1051 553h12v12h-12zM1298 553h11v12h-11zM1462 553h12v12h-12z" fill="#c00000"/>
    <text x="738" y="572" font-size="46" fill="#f0f">Cin</text>
    <text x="1621" y="572" font-size="46" fill="#f0f">C00</text>
    <text x="1143" y="571" font-size="40" fill="#00cc66">INV</text>
    <text x="1193" y="642" font-size="40" fill="#dccb00">X1</text>
    <text x="1317" y="694" font-size="42" fill="#f00">(schematic)</text>
    <path d="M810 684v17l4-3.500 2.500 6 3-1.500-2.500-5.500h5z" fill="#fff" stroke="#333" stroke-width=".5"/>
   </svg>
  </div>
 </section>

 <section class="dock-r d-flex flex-column flex-shrink-0">
  <div class="cap d-flex align-items-center">Properties<svg class="ic-12 ms-auto"><use href="#pin"/></svg><svg class="ic-12 ms-1"><use href="#xx"/></svg></div>
  <div class="well prop-well stretch flex-fill d-flex flex-column">
   <div class="prop-head">Schematic of C00</div>
   <div class="prop-tools d-flex align-items-center">
    <button class="tb" aria-label="New property"><svg class="ic" viewBox="0 0 16 16"><path d="M4.500 4.500h11v11h-11z" fill="none" stroke="#222" stroke-dasharray="3 2"/><use href="#star" width="9" height="9"/></svg></button>
    <button class="tb" aria-label="Delete property"><svg class="ic" viewBox="0 0 16 16"><path d="M3 3l10 11M13 3L3 13" stroke="#888" stroke-width="2.200"/></svg></button>
    <button class="tb" aria-label="Promote"><svg class="ic" viewBox="0 0 16 16"><path d="M8 3l5 5h-3.500v6h-3V8H3z" fill="#888"/></svg></button>
    <button class="tb" aria-label="Rename"><svg class="ic ic-wide" viewBox="0 0 18 16"><text x="1" y="6" font-size="10" fill="#777">a</text><text x="10" y="15" font-size="11" fill="#777">b</text><path d="M1 11.500h6M5 9l3 2.500L5 14" stroke="#777" stroke-width="1.500" fill="none"/></svg></button>
    <button class="tb" aria-label="Copy value"><svg class="ic ic-wide" viewBox="0 0 18 16"><text x="1" y="6" font-size="10" fill="#777">a</text><text x="8" y="15" font-size="10" fill="#777">a1</text><path d="M0 11.500h6M4 9l3 2.500L4 14" stroke="#777" stroke-width="1.500" fill="none"/></svg></button>
   </div>
   <div class="prop-tools flat d-flex align-items-center">
    <button class="tb" aria-label="Inherited"><svg class="ic" viewBox="0 0 16 16"><path d="M.5 1.500h5v3h-5zM.5 7h5v3h-5zM.5 12.500h5v3h-5zM10.500 12.500h5v3h-5z" fill="#fff" stroke="#222"/><path d="M6 3l6 9M6 8.500l5 4M6 14h4" stroke="#00f" fill="none"/></svg></button>
    <button class="tb" aria-label="Disable"><svg class="ic" viewBox="0 0 16 16"><circle cx="8" cy="8" r="5" fill="#1414d8" stroke="#c01020" stroke-width="2"/><path d="M4.500 11.500l7-7" stroke="#e01020" stroke-width="2"/></svg></button>
    <button class="tb" aria-label="Visible"><svg class="ic" viewBox="0 0 16 16"><path d="M0 8c4-5 12-5 16 0-4 5-12 5-16 0z"/><path d="M3 9q2-3 4-3M13 9q-1-2-2-2" stroke="#eee" fill="none"/><circle cx="8.500" cy="8" r="2" fill="#275e20"/></svg></button>
    <button class="tb" aria-label="Help"><svg class="ic" viewBox="0 0 16 16"><path d="M4 5c0-5 8.500-5 8.500 0 0 3-4 3-4 6" fill="none" stroke="#2d5a22" stroke-width="3.400"/><path d="M4.300 5c0-4.500 8-4.500 8 0 0 3-4 3-4 6" fill="none" stroke="#5a9a40" stroke-width="1.400"/><path d="M6.500 12.500h3.500V16H6.500z" fill="#3f7a2c"/></svg></button>
    <button class="tb on" aria-label="Parameters"><svg class="ic" viewBox="0 0 16 16"><text x="8" y="14" style="font:bold 19px 'Liberation Serif',serif" text-anchor="middle" fill="#5a9a40" stroke="#2d5a22" stroke-width=".6">P</text></svg></button>
   </div>
   <div class="prop-body stretch flex-fill bg-white overflow-hidden">
    <table class="prop-grid">
     <colgroup><col class="p-mark"><col class="p-name"><col></colgroup>
     <tbody>
      <tr class="grp"><td><svg class="pm" viewBox="0 0 9 9"><path d="M.5.500h8v8h-8z" fill="#fff" stroke="#808080"/><path d="M2 4.500h5" stroke="#000"/></svg></td><td colspan="2">System</td></tr>
      <tr><td></td><th>Author</th><td>vlsi</td></tr>
      <tr class="ro"><td><svg class="pm" viewBox="0 0 9 9"><path d="M.5.500h8v8h-8z" fill="#fff" stroke="#808080"/><path d="M2 4.500h5M4.500 2v5" stroke="#000"/></svg></td><th>Cell</th><td>C00</td></tr>
      <tr class="ro"><td></td><th>Date</th><td>Sat Dec&nbsp; 2 01:21:46</td></tr>
      <tr><td></td><th>Info</th><td></td></tr>
      <tr class="ro"><td></td><th>Library</th><td>Karim_Project</td></tr>
      <tr class="ro"><td><svg class="pm" viewBox="0 0 9 9"><path d="M.5.500h8v8h-8z" fill="#fff" stroke="#808080"/><path d="M2 4.500h5M4.500 2v5" stroke="#000"/></svg></td><th>Name</th><td>schematic</td></tr>
      <tr><td></td><th>Organization</th><td></td></tr>
      <tr class="ro"><td></td><th>RevisionCount</th><td>1</td></tr>
      <tr class="ro"><td></td><th>Type</th><td>schematic</td></tr>
      <tr><td></td><th>Version</th><td></td></tr>
      <tr class="ro"><td></td><th>Page</th><td class="lnk">Page0</td></tr>
     </tbody>
    </table>
   </div>
   <div class="prop-desc"></div>
  </div>
  <div class="pane-tabs d-flex align-items-start"><button class="cur">Properties<svg class="ic-12"><use href="#xx"/></svg></button><button>Find</button></div>
 </section>
</main>

<section>
 <div class="cap d-flex align-items-center">Command<svg class="ic-12 ms-auto"><use href="#pin"/></svg><svg class="ic-12 ms-1"><use href="#xx"/></svg></div>
 <div class="cmd-box">
  <div class="d-flex"><div class="cmd-text flex-fill overflow-hidden"><div>point click 4.2 4.1</div><div>cell open C00 Karim_Project schematic</div><div>point click 3.4 3.6</div></div>
   <div class="sb sb-v d-flex flex-column"><button class="raise" aria-label="Scroll up"><svg><use href="#up"/></svg></button><span class="raise thumb-cmd mt-auto"></span><button class="raise" aria-label="Scroll down"><svg><use href="#down"/></svg></button></div></div>
  <div class="sb sb-h d-flex"><button class="raise" aria-label="Scroll left"><svg><use href="#lf"/></svg></button><span class="raise thumb-wide"></span><button class="raise ms-auto" aria-label="Scroll right"><svg><use href="#rt"/></svg></button></div>
 </div>
</section>
<div class="st d-flex"><span class="flex-fill">Ready</span><span class="s-mode">Select</span><span class="s-a"></span><span class="s-b"></span><span class="dim s-key">SDE</span><span class="dim s-key">CAP</span><span class="s-num">NUM</span><span class="dim s-key">INS</span>
 <svg viewBox="0 0 16 17"><path d="M8 .7c-4 0-6 3-4.700 6 .8 1.800 2 2.300 2 4.300h5.400c0-2 1.200-2.500 2-4.300C14 3.700 12 .7 8 .7z" fill="#ffee00" stroke="#222"/><path d="M5.500 11h5v4L9 16.500H7L5.500 15z" fill="#555"/></svg></div>

<footer class="task d-flex align-items-center">
 <button class="home" aria-label="Show desktop"><svg class="ic" viewBox="0 0 16 16"><path d="M8 2h6v6H8z" fill="none" stroke="#2e3436" stroke-width="2"/><path d="M5 7H2v7h7v-3" fill="none" stroke="#2e3436" stroke-width="2" stroke-dasharray="5 1.500"/></svg></button>
 <button class="app"><svg viewBox="0 0 22 22"><rect x="3" y="1" width="17" height="21" rx="1" fill="#4a82c8" stroke="#24508e"/><path d="M5 5h13v7H5zM5 14h13v7H5z" fill="#6aa0dc" stroke="#24508e"/><path d="M8 7h7v3H8zM8 16h7v3H8z" fill="#eee" stroke="#444"/></svg><span>Pictures</span></button>
 <button class="app dim"><svg viewBox="0 0 22 22"><rect x=".5" y=".5" width="21" height="21" rx="1" fill="#ddd" stroke="#aaa"/><path d="M2.500 2.500h17v17h-17z" fill="#8c8e8e"/><path d="M4 5l3 2-3 2M8 10h4" stroke="#eee" fill="none" stroke-width="1.200"/></svg><span>[Terminal]</span></button>
 <button class="app cur"><svg viewBox="0 0 22 22"><path d="M.5.500h21v21H.5z" fill="#6c9424" stroke="#222"/><path d="M5 21c8 0 14-5 14-12M1 16l6-5" stroke="#5fd02a" stroke-width="2" fill="none"/><text x="11" y="13" text-anchor="middle" font-size="10" font-weight="bold">SED</text></svg><span>S-Edit 2022.2 - [C00 Karim_Project:...</span></button>
 <button class="app dim"><svg viewBox="0 0 22 22"><path d="M3 5c1-2 2-3 3-2l2 2c1-1 3-1 4-1 0-2 1-3 2-4 1 3 7 5 7 12 0 6-4 10-10 10S1 17 1 12c0-3 1-5 2-7z" fill="#ffa86a"/><path d="M12 4c0-2 1-3 2-4 1 3 7 5 7 12l-5-4z" fill="#ffe27a"/><circle cx="11" cy="12" r="5" fill="#a58be0"/><path d="M3 16c3 6 12 6 16 1l-6 0c-4 0-7-2-8-5z" fill="#ff8a90"/></svg><span>[VLSI_Lab 05.pdf — Mozilla Firefox]</span></button>
 <button class="app"><svg viewBox="0 0 22 22"><path d="M.5.500h21v21H.5z" fill="#f4410c" stroke="#222"/><path d="M1 6h20M5 21V12M14 21c0-6 3-8 7-8" stroke="#ff9050" fill="none"/><text x="11" y="13" text-anchor="middle" font-size="10" font-weight="bold">LED</text></svg><span>L-Edit 2022.2 - [C3       Karim_Proje...</span></button>
 <div class="pager d-flex align-items-center ms-auto"><button class="cur" aria-label="Workspace 1"></button><button aria-label="Workspace 2"></button><button aria-label="Workspace 3"></button><button aria-label="Workspace 4"></button></div>
</footer>
<script>
// snap grid: one dot at each pitch step, rounded to whole pixels
let d = '';
for (let r = 0; r < 17; r++) for (let c = 0; c < 25; c++)
  d += `M${Math.round(686 + c * 41.12)} ${Math.round(271 + r * 41.12)}.5h1`;
document.getElementById('dots').setAttribute('d', d);
</script>
</body>
</html>
